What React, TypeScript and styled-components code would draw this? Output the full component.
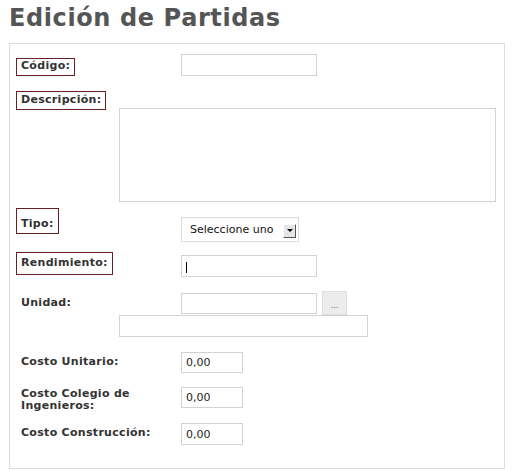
import React from "react";
import styled, { createGlobalStyle } from "styled-components";

const Global = createGlobalStyle`
  html, body { margin: 0; padding: 0; background: #fff; }
  body { font-family: "DejaVu Sans", Verdana, sans-serif; }
`;

const Page = styled.div`
  width: 512px;
  height: 474px;
  overflow: hidden;
`;

const Title = styled.h1`
  margin: 0 0 11px 9px;
  padding-top: 4px;
  font-size: 24px;
  line-height: 28px;
  font-weight: bold;
  letter-spacing: 0.6px;
  color: #555;
`;

const Panel = styled.div`
  margin-left: 9px;
  width: 496px;
  box-sizing: border-box;
  border: 1px solid #dcdcdc;
  padding: 0 0 23px 6px;
  display: flex;
  flex-direction: column;
`;

const Row = styled.div<{ $mt: number; $h: number; $indent?: number }>`
  display: flex;
  align-items: flex-start;
  margin-top: ${(p) => p.$mt}px;
  height: ${(p) => p.$h}px;
  padding-left: ${(p) => p.$indent ?? 0}px;
`;

const LabelCell = styled.div`
  width: 165px;
  flex: none;
`;

const Label = styled.div<{ $flag?: boolean; $mt?: number; $pt?: number; $pb?: number; $w?: number }>`
  display: inline-block;
  box-sizing: border-box;
  margin-top: ${(p) => p.$mt ?? 0}px;
  padding: ${(p) => p.$pt ?? 0}px 4px ${(p) => p.$pb ?? 0}px 4px;
  border: 1px solid ${(p) => (p.$flag ? "#6b1f24" : "transparent")};
  font-size: 11px;
  line-height: 12px;
  font-weight: bold;
  letter-spacing: 0.3px;
  color: #333;
  max-width: ${(p) => p.$w ?? 165}px;
`;

const Field = styled.input<{ $w: number; $h?: number; $mt?: number }>`
  box-sizing: border-box;
  width: ${(p) => p.$w}px;
  height: ${(p) => p.$h ?? 22}px;
  margin: ${(p) => p.$mt ?? 0}px 0 0 0;
  padding: 0 4px;
  border: 1px solid #d2d2d2;
  background: #fff;
  font-family: "DejaVu Sans", Verdana, sans-serif;
  font-size: 11px;
  color: #222;
  outline: none;
`;

const FieldWrap = styled.div<{ $mt?: number }>`
  position: relative;
  margin-top: ${(p) => p.$mt ?? 0}px;
  display: flex;
`;

const Caret = styled.span`
  position: absolute;
  left: 5px;
  top: 7px;
  width: 1px;
  height: 11px;
  background: #000;
`;

const Area = styled.textarea`
  box-sizing: border-box;
  width: 377px;
  height: 94px;
  margin: 0;
  border: 1px solid #d2d2d2;
  resize: none;
  outline: none;
  font-family: "DejaVu Sans", Verdana, sans-serif;
  font-size: 11px;
`;

const SelectBox = styled.div`
  box-sizing: border-box;
  width: 118px;
  height: 25px;
  margin-top: 9px;
  border: 1px solid #dcdcdc;
  display: flex;
  align-items: center;
  padding: 0 2px 0 8px;
  font-size: 11px;
  color: #111;
`;

const Arrow = styled.span`
  box-sizing: border-box;
  width: 13px;
  height: 14px;
  margin: 2px 0 0 auto;
  background: #e6e6e6;
  border-top: 1px solid #fff;
  border-left: 1px solid #fff;
  border-right: 1px solid #555;
  border-bottom: 1px solid #555;
  display: flex;
  align-items: center;
  justify-content: center;
`;

const Tri = styled.span`
  width: 0;
  height: 0;
  border-left: 3px solid transparent;
  border-right: 3px solid transparent;
  border-top: 3px solid #000;
`;

const DotsButton = styled.button`
  box-sizing: border-box;
  width: 25px;
  height: 24px;
  margin-left: 5px;
  padding: 6px 0 0;
  border: 1px solid #dedede;
  background: #ececec;
  color: #666;
  font-family: "DejaVu Sans", Verdana, sans-serif;
  font-size: 8px;
  line-height: 10px;
`;

export default function App() {
  return (
    <Page>
      <Global />
      <Title>Edición de Partidas</Title>
      <Panel>
        <Row $mt={10} $h={22}>
          <LabelCell>
            <Label $flag $mt={1} $pt={1} $pb={3}>Código:</Label>
          </LabelCell>
          <Field $w={136} readOnly />
        </Row>
        <Row $mt={12} $h={20}>
          <LabelCell>
            <Label $flag $pt={2} $pb={3}>Descripción:</Label>
          </LabelCell>
        </Row>
        <Row $mt={0} $h={94} $indent={103}>
          <Area readOnly />
        </Row>
        <Row $mt={6} $h={34}>
          <LabelCell>
            <Label $flag $pt={9} $pb={3}>Tipo:</Label>
          </LabelCell>
          <SelectBox>
            <span>Seleccione uno</span>
            <Arrow>
              <Tri />
            </Arrow>
          </SelectBox>
        </Row>
        <Row $mt={9} $h={26}>
          <LabelCell>
            <Label $flag $pt={4} $pb={5}>Rendimiento:</Label>
          </LabelCell>
          <FieldWrap $mt={4}>
            <Field $w={136} readOnly />
            <Caret />
          </FieldWrap>
        </Row>
        <Row $mt={14} $h={24}>
          <LabelCell>
            <Label $mt={1}>Unidad:</Label>
          </LabelCell>
          <Field $w={136} $h={21} $mt={2} readOnly />
          <DotsButton type="button">...</DotsButton>
        </Row>
        <Row $mt={0} $h={22} $indent={103}>
          <Field $w={249} readOnly />
        </Row>
        <Row $mt={13} $h={23}>
          <LabelCell>
            <Label>Costo Unitario:</Label>
          </LabelCell>
          <Field $w={62} $h={21} $mt={2} defaultValue="0,00" readOnly />
        </Row>
        <Row $mt={14} $h={26}>
          <LabelCell>
            <Label $w={150}>Costo Colegio de Ingenieros:</Label>
          </LabelCell>
          <Field $w={62} $h={21} defaultValue="0,00" readOnly />
        </Row>
        <Row $mt={8} $h={24}>
          <LabelCell>
            <Label>Costo Construcción:</Label>
          </LabelCell>
          <Field $w={62} $h={22} $mt={2} defaultValue="0,00" readOnly />
        </Row>
      </Panel>
    </Page>
  );
}
